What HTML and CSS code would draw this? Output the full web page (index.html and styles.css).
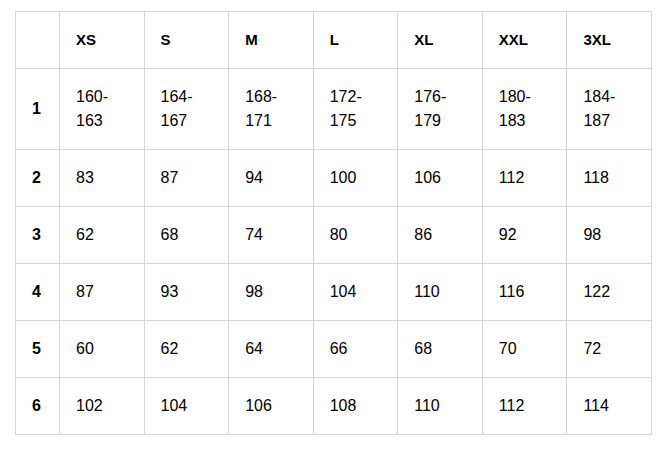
FILE: index.html
```html
<!DOCTYPE html>
<html>
<head>
<meta charset="utf-8">
<link rel="stylesheet" href="styles.css">
</head>
<body>
<div class="wrap">
<table class="size-table">
<colgroup>
<col class="c-first">
<col><col><col><col><col><col><col>
</colgroup>
<thead>
<tr><th></th><th>XS</th><th>S</th><th>M</th><th>L</th><th>XL</th><th>XXL</th><th>3XL</th></tr>
</thead>
<tbody>
<tr><th>1</th><td>160-<br>163</td><td>164-<br>167</td><td>168-<br>171</td><td>172-<br>175</td><td>176-<br>179</td><td>180-<br>183</td><td>184-<br>187</td></tr>
<tr><th>2</th><td>83</td><td>87</td><td>94</td><td>100</td><td>106</td><td>112</td><td>118</td></tr>
<tr><th>3</th><td>62</td><td>68</td><td>74</td><td>80</td><td>86</td><td>92</td><td>98</td></tr>
<tr><th>4</th><td>87</td><td>93</td><td>98</td><td>104</td><td>110</td><td>116</td><td>122</td></tr>
<tr><th>5</th><td>60</td><td>62</td><td>64</td><td>66</td><td>68</td><td>70</td><td>72</td></tr>
<tr><th>6</th><td>102</td><td>104</td><td>106</td><td>108</td><td>110</td><td>112</td><td>114</td></tr>
</tbody>
</table>
</div>
</body>
</html>
```
FILE: styles.css
```css
html, body {
  margin: 0;
  padding: 0;
  background: #fff;
}
.wrap {
  padding: 11px 0 0 15px;
}
.size-table {
  width: 637px;
  table-layout: fixed;
  border-collapse: collapse;
  font-family: "Liberation Sans", Arial, sans-serif;
  font-size: 16px;
  line-height: 24px;
  color: #000;
}
.c-first {
  width: 44px;
}
.size-table th,
.size-table td {
  border: 1px solid #d6d6d6;
  padding: 16px;
  text-align: left;
  vertical-align: middle;
}
.size-table th {
  font-weight: 700;
}
.size-table thead th {
  font-size: 15px;
}
.size-table td {
  font-weight: 400;
}
```
